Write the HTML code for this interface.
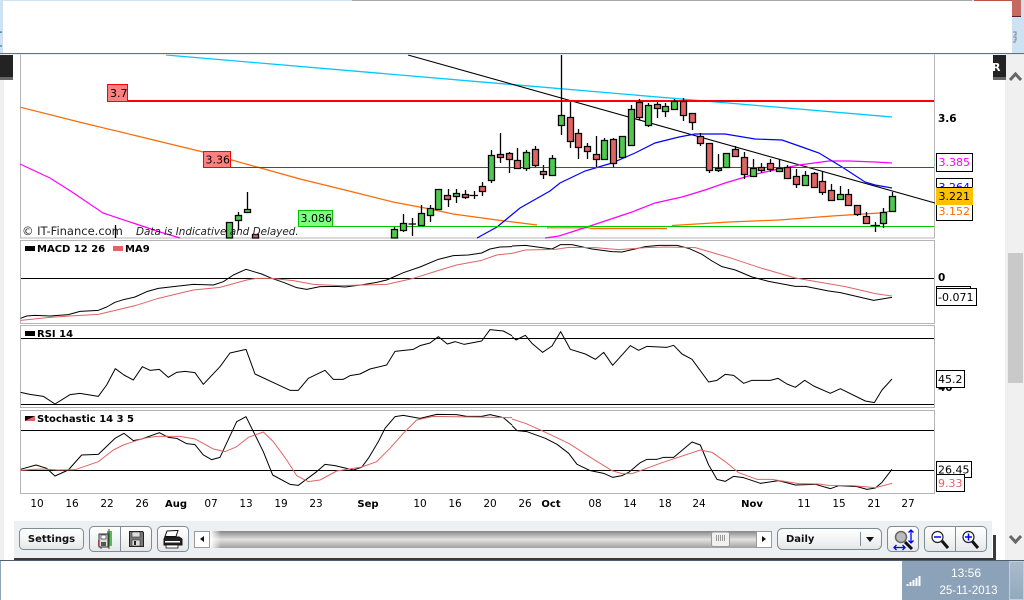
<!DOCTYPE html>
<html><head><meta charset="utf-8"><style>
html,body{margin:0;padding:0;width:1024px;height:600px;overflow:hidden;background:#fff}
svg{display:block}
text{font-family:"DejaVu Sans",sans-serif;font-size:11px}
.b{font-weight:bold;font-size:10px}
.a{font-size:10.5px}
.l{fill:none;stroke:#000;stroke-width:1.100}
.h{stroke-width:1;shape-rendering:crispEdges}
.z{fill:none;stroke-width:3;stroke-linejoin:round}
</style></head><body>
<svg width="1024" height="600" viewBox="0 0 1024 600" xmlns="http://www.w3.org/2000/svg">
<defs>
<linearGradient id="btn" x1="0" y1="0" x2="0" y2="1"><stop offset="0" stop-color="#fff"/><stop offset=".55" stop-color="#f2f3f4"/><stop offset="1" stop-color="#e3e6e8"/></linearGradient>
<linearGradient id="trk" x1="0" y1="0" x2="0" y2="1"><stop offset="0" stop-color="#868686"/><stop offset=".5" stop-color="#e2e2e2"/><stop offset="1" stop-color="#a0a0a0"/></linearGradient>
<linearGradient id="trkh" x1="0" y1="0" x2="1" y2="0"><stop offset="0" stop-color="#fff"/><stop offset=".02" stop-color="#fff" stop-opacity="0"/><stop offset="1" stop-color="#fff" stop-opacity="0"/></linearGradient>
<linearGradient id="sd" x1="0" y1="0" x2="0" y2="1"><stop offset="0" stop-color="#a9bccd"/><stop offset="1" stop-color="#93a9bd"/></linearGradient>
</defs>

<!-- page chrome -->
<rect width="1024" height="600" fill="#fff"/>
<rect x="0" y="0" width="4" height="560" fill="#f0f0f0"/>
<rect x="1005" y="54" width="19" height="507" fill="#f0f0f0"/>
<rect x="1008" y="253" width="15" height="130" fill="#c9c9c9"/>
<path d="M1010 80l5.500-6 5.500 6" fill="none" stroke="#666" stroke-width="3"/>
<path d="M1010 536l5.500 6 5.500-6" fill="none" stroke="#666" stroke-width="3"/>
<rect x="0" y="55" width="13" height="24" fill="#232323"/><rect x="0" y="77" width="13" height="3" fill="#666"/>
<rect x="993" y="55" width="13" height="24" fill="#232323"/><rect x="993" y="77" width="13" height="3" fill="#666"/>
<text x="992" y="71" fill="#fff" class="b" style="font-size:11px">R</text>

<!-- chart panels -->
<rect x="20.500" y="40.500" width="914" height="197.500" fill="#fff" stroke="#b5b5b5" class="h"/>
<rect x="20.500" y="240.500" width="914" height="83" fill="#fff" stroke="#b5b5b5" class="h"/>
<rect x="20.500" y="325.500" width="914" height="82" fill="#fff" stroke="#b5b5b5" class="h"/>
<rect x="20.500" y="410.500" width="914" height="83" fill="#fff" stroke="#b5b5b5" class="h"/>

<!-- main chart lines -->
<path d="M166 55L892 117" fill="none" stroke="#00c8ff" stroke-width="1.300"/>
<path d="M408 55L935 203" class="l"/>
<path d="M20.700 107.300L83 123 133 135 203 152 257 167 300 179 353 192 393 202 430 209 453 214 497 220 537 225M547 227.800H590M590 228.500H667M672 225.500L729 222 779 220 832 216 879 213 892 211" fill="none" stroke="#ff6a00" stroke-width="1.200"/>
<path d="M20 164L50 178 72 192 103 213 133 223 160 232 180 238" fill="none" stroke="#f0f" stroke-width="1.200"/>
<path d="M545 238L559 236 590 226 632 212 655 203 682 197 705 190 725 183 752 175 779 169 799 165 829 161 849 161 875 162 892 163" fill="none" stroke="#f0f" stroke-width="1.200"/>
<path d="M477 238L497 227 520 208 550 191 560 183 585 171 612 163 635 153 655 143 679 137 695 134 725 134 755 139 782 140 802 147 819 153 842 167 865 182 875 185 892 188" fill="none" stroke="#00f" stroke-width="1.200"/>
<rect x="127" y="100" width="807" height="2" fill="#f00"/>
<rect x="231" y="167" width="703" height="1" fill="#f00"/>
<rect x="333" y="226" width="601" height="1" fill="#00c800"/>
<rect x="107.500" y="84.500" width="20" height="17" fill="#ff8080" stroke="#f00"/>
<rect x="203.500" y="151.500" width="27" height="16" fill="#ff8080" stroke="#f00"/>
<rect x="298.500" y="210.500" width="34" height="16" fill="#80ff80" stroke="#00c000"/>
<text x="110" y="97">3.7</text>
<text x="205.500" y="163.500">3.36</text>
<text x="300.500" y="222">3.086</text>

<!-- candles -->
<path d="M115.500 225V238M238.500 212V230M247.500 192V209M421.500 205V213M394.500 227V238M403.500 214V232M412.500 218V236M408.500 224H416M430.500 205V222M448.500 189V207M456.500 189V203M465.500 190V199M474.500 191V199M469.500 195.500H478M482.500 182V196M491.500 150V183M500.500 133V163M509.500 152V173M517.500 148V169M526.500 150V171M535.500 146V167M543.500 165V179M552.500 155V175M561.500 55V135M570.500 102V148M578.500 129V159M587.500 143V159M596.500 136V167M604.500 138V160M613.500 138V167M622.500 136V158M631.500 105V145M639.500 99V120M648.500 103V127M657.500 102V118M665.500 103V117M674.500 99V109M683.500 98V121M692.500 113V130M700.500 133V146M709.500 143V173M718.500 154V172M726.500 153V168M735.500 146V157M744.500 152V179M753.500 159V177M761.500 163V173M770.500 159V172M779.500 159V172M787.500 165V178M796.500 169V188M805.500 171V185M814.500 172V187M822.500 171V195M831.500 184V201M840.500 186V199M848.500 189V205M857.500 205V216M866.500 212V223M875.500 222V232M870.500 225.500H880M883.500 208V228M892.500 192V211" fill="none" stroke="#000" stroke-width="1.300"/>
<path d="M226.500 222.500h6v15.500h-6zM235.500 215.500h6v5h-6zM244.500 209.500h6v3h-6zM391.500 229.500h6v8.500h-6zM400.500 223.500h6v7h-6zM418.500 213.500h6v12h-6zM427.500 208.500h6v7h-6zM435.500 189.500h6v20h-6zM453.500 193.500h6v3h-6zM488.500 155.500h6v25h-6zM523.500 152.500h6v16h-6zM549.500 158.500h6v17h-6zM558.500 115.500h6v10h-6zM601.500 140.500h6v19h-6zM619.500 136.500h6v21h-6zM628.500 109.500h6v36h-6zM645.500 105.500h6v20h-6zM662.500 106.500h6v5h-6zM671.500 101.500h6v8h-6zM715.500 168.500h6v2h-6zM723.500 153.500h6v14h-6zM750.500 168.500h6v8h-6zM776.500 168.500h6v3h-6zM802.500 175.500h6v10h-6zM837.500 194.500h6v5h-6zM880.500 212.500h6v11h-6zM889.500 196.500h6v15h-6z" fill="#4ec94e" stroke="#000" stroke-width="1.300"/>
<path d="M252.500 234.500h6v3.500h-6zM444.500 195.500h6v4h-6zM462.500 194.500h6v3h-6zM479.500 186.500h6v5h-6zM497.500 154.500h6v3h-6zM506.500 153.500h6v6h-6zM514.500 160.500h6v8h-6zM532.500 149.500h6v16h-6zM540.500 171.500h6v3h-6zM567.500 117.500h6v24h-6zM575.500 133.500h6v14h-6zM584.500 146.500h6v5h-6zM593.500 154.500h6v5h-6zM610.500 139.500h6v24h-6zM636.500 102.500h6v15h-6zM654.500 104.500h6v4h-6zM680.500 101.500h6v14h-6zM689.500 113.500h6v9h-6zM697.500 136.500h6v7h-6zM706.500 143.500h6v27h-6zM732.500 149.500h6v7h-6zM741.500 157.500h6v17h-6zM758.500 167.500h6v3h-6zM767.500 163.500h6v6h-6zM784.500 167.500h6v11h-6zM793.500 176.500h6v8h-6zM811.500 173.500h6v14h-6zM819.500 181.500h6v11h-6zM828.500 190.500h6v10h-6zM845.500 194.500h6v11h-6zM854.500 205.500h6v9h-6zM863.500 216.500h6v7h-6z" fill="#e06464" stroke="#000" stroke-width="1.300"/>

<!-- watermark -->
<text x="22" y="235" fill="#222" style="font-size:11.500px">© IT-Finance.com</text>
<text x="136" y="235" fill="#222" font-style="italic" style="font-size:10.400px">Data is Indicative and Delayed.</text>

<!-- panel labels -->
<rect x="25" y="246" width="10" height="5" fill="#000"/>
<text x="37" y="252" class="b">MACD 12 26</text>
<rect x="113" y="246" width="10" height="5" fill="#e06464"/>
<text x="125" y="252" class="b">MA9</text>
<rect x="25" y="331" width="10" height="5" fill="#000"/>
<text x="37" y="337" class="b">RSI 14</text>
<path d="M25 421L35 416V421Z" fill="#e06464"/><path d="M25 416H35L25 421Z" fill="#000"/>
<text x="37" y="422" class="b">Stochastic 14 3 5</text>

<!-- level lines -->
<path d="M21 278.500H934M21 338.500H934M21 404.500H934M21 430.500H934M21 470.500H934" stroke="#000" class="h" fill="none"/>

<!-- oscillators -->
<g transform="translate(0,235) scale(.33333)">
<polyline class="z" stroke="#000" points="62,250 80,243 105,241 150,243 205,239 240,229 295,226 320,216 345,202 370,194 405,186 440,170 475,160 520,155 580,148 640,150 670,140 700,120 738,103 785,117 815,130 850,142 890,158 920,163 960,155 1010,154 1035,156 1090,149 1130,142 1160,135 1210,113 1260,96 1315,73 1360,62 1405,60 1445,54 1470,42 1500,36 1536,35"/>
<polyline class="z" stroke="#e06464" points="62,256 150,247 210,243 295,238 405,212 475,190 580,165 660,157 740,135 770,130 815,130 880,137 940,148 1020,152 1160,148 1240,130 1320,105 1370,90 1445,76 1490,60 1536,55"/>
<polyline class="z" stroke="#000" points="62,472 90,478 130,484 165,507 210,479 240,475 295,484 320,450 346,401 372,420 400,435 427,395 450,406 478,403 505,427 530,412 555,409 585,413 610,448 660,395 690,354 738,343 765,417 870,466 895,466 925,430 975,406 1000,433 1030,433 1050,422 1080,417 1110,402 1160,390 1185,349 1240,343 1260,332 1290,324 1315,305 1342,327 1366,320 1392,328 1445,318 1470,284 1510,288 1536,302"/>
<polyline class="z" stroke="#000" points="62,703 108,690 140,700 165,723 205,705 245,660 295,658 345,610 372,595 400,617 425,612 478,593 505,607 530,610 560,626 585,629 610,660 635,674 660,667 710,560 738,545 790,650 818,720 870,748 895,751 950,710 975,688 1005,692 1060,705 1085,697 1105,670 1135,620 1155,580 1185,545 1210,541 1260,550 1310,538 1370,539 1400,544 1445,544 1470,539 1510,548 1536,570"/>
<polyline class="z" stroke="#e06464" points="62,706 100,703 130,702 175,705 225,704 295,680 340,645 370,630 430,610 470,604 540,604 585,612 640,642 675,650 710,635 745,607 790,591 820,620 860,675 890,722 925,740 960,735 1010,708 1085,696 1130,680 1170,640 1210,595 1250,555 1300,544 1536,548"/>
</g>
<g transform="translate(512,235) scale(.33333)">
<polyline class="z" stroke="#000" points="0,33 40,31 120,42 145,29 180,29 240,42 300,50 330,51 400,35 440,31 495,31 530,40 570,58 600,78 630,95 670,105 720,126 770,139 850,154 880,154 950,168 985,173 1085,196 1110,192 1140,187"/>
<polyline class="z" stroke="#e06464" points="0,55 40,45 130,43 170,37 250,38 320,44 400,38 460,36 550,38 650,67 740,97 850,129 1000,155 1090,176 1140,183"/>
<polyline class="z" stroke="#000" points="0,305 12,315 40,301 60,325 92,352 120,333 146,290 175,343 220,357 250,373 275,352 302,391 355,332 380,346 405,334 465,337 485,331 510,357 540,373 590,441 615,436 640,418 665,421 695,445 720,436 775,436 798,430 825,447 850,457 878,436 905,453 955,475 985,461 1060,498 1087,503 1110,465 1140,432"/>
<polyline class="z" stroke="#000" points="0,572 15,587 45,590 100,610 135,628 170,655 195,688 235,707 275,715 302,727 330,722 350,712 385,683 405,673 435,673 455,667 485,667 540,621 565,630 590,690 615,733 640,739 665,724 695,728 745,745 800,737 850,750 910,748 955,761 980,752 1035,755 1065,763 1090,759 1110,742 1140,703"/>
<polyline class="z" stroke="#e06464" points="0,552 40,565 90,587 170,625 240,670 300,707 330,716 360,716 450,683 565,645 600,652 640,680 680,713 735,733 780,733 860,746 920,747 950,751 1020,752 1090,758 1140,745"/>
</g>

<!-- axis values -->
<text x="938" y="122" class="b" style="font-size:10.500px">3.6</text>
<text x="938" y="281" class="b" style="font-size:10.500px">0</text>
<text x="938" y="391" class="b" style="font-size:10.500px">40</text>
<rect x="936.500" y="153.500" width="36" height="18" fill="#fff" stroke="#000" class="h"/>
<text x="938.500" y="166" fill="#f0f">3.385</text>
<rect x="936.500" y="178.500" width="36" height="42" fill="#fff" stroke="#000" class="h"/>
<text x="938.500" y="191" fill="#00f">3.264</text>
<rect x="936.500" y="187.500" width="36" height="17" fill="#ffc000" stroke="#ffc000" class="h"/>
<path d="M936.500 187.500H972.500" stroke="#000" class="h"/>
<text x="938.500" y="200" fill="#000">3.221</text>
<text x="938.500" y="215" fill="#ff6a00">3.152</text>
<rect x="936.500" y="286.500" width="34" height="10" fill="#fff" stroke="#000" class="h"/>
<rect x="936.500" y="288.500" width="40" height="17" fill="#fff" stroke="#000" class="h"/>
<text x="938" y="301">-0.071</text>
<rect x="936.500" y="370.500" width="28" height="17" fill="#fff" stroke="#000" class="h"/>
<text x="938" y="383">45.2</text>
<rect x="936.500" y="461.500" width="35" height="16" fill="#fff" stroke="#000" class="h"/>
<text x="938" y="473.500">26.45</text>
<rect x="936.500" y="474.500" width="28" height="17" fill="#fff" stroke="#000" class="h"/>
<text x="938" y="487" fill="#e06464">9.33</text>

<!-- date axis -->
<g text-anchor="middle">
<text x="37" y="507" class="a">10</text><text x="72" y="507" class="a">16</text><text x="107" y="507" class="a">22</text><text x="142" y="507" class="a">26</text>
<text x="176" y="507" class="b">Aug</text>
<text x="211" y="507" class="a">07</text><text x="246" y="507" class="a">13</text><text x="281" y="507" class="a">19</text><text x="316" y="507" class="a">23</text>
<text x="368" y="507" class="b">Sep</text>
<text x="420" y="507" class="a">10</text><text x="455" y="507" class="a">16</text><text x="490" y="507" class="a">20</text><text x="525" y="507" class="a">26</text>
<text x="551" y="507" class="b">Oct</text>
<text x="595" y="507" class="a">08</text><text x="630" y="507" class="a">14</text><text x="665" y="507" class="a">18</text><text x="699" y="507" class="a">24</text>
<text x="752" y="507" class="b">Nov</text>
<text x="804" y="507" class="a">11</text><text x="839" y="507" class="a">15</text><text x="874" y="507" class="a">21</text><text x="908" y="507" class="a">27</text>
</g>

<!-- toolbar -->
<rect x="993" y="535" width="3" height="26" fill="#3a3a3a"/>
<rect x="14" y="521" width="978" height="37" fill="#edf0f2"/>
<rect x="14" y="558" width="982" height="3" fill="#3a3a3a"/>

<rect x="19.500" y="528.500" width="64" height="21" rx="4" fill="url(#btn)" stroke="#7f8c94"/>
<text x="51.500" y="542" text-anchor="middle" class="b" fill="#111">Settings</text>

<rect x="89.500" y="526.500" width="62" height="25" rx="4" fill="url(#btn)" stroke="#7f8c94"/>
<path d="M120.500 527V551" stroke="#7f8c94" class="h"/>
<!-- candle save -->
<rect x="98" y="540" width="6" height="6" fill="#f06060"/><rect x="107" y="531" width="5" height="15" fill="#50c050"/>
<path d="M101 535V549M109 529V549" stroke="#444" fill="none"/>
<path d="M99 534h9v13h-9z" fill="#ddd" stroke="#333"/><rect x="101" y="535" width="5" height="4" fill="#fff" stroke="#333" stroke-width=".7"/><rect x="101" y="542" width="5" height="4" fill="#555"/>
<!-- floppy -->
<path d="M129.500 531.500h13l1 1v14h-14z" fill="#777" stroke="#222"/><rect x="132" y="532" width="8" height="5" fill="#ddd" stroke="#333" stroke-width=".6"/><rect x="132" y="540" width="8" height="6" fill="#ddd" stroke="#333" stroke-width=".6"/><rect x="134" y="541" width="2" height="4" fill="#222"/>

<rect x="157.500" y="526.500" width="31" height="25" rx="4" fill="url(#btn)" stroke="#7f8c94"/>
<!-- printer -->
<path d="M167 531l9-.500 2 0-2 6h-11z" fill="#fff" stroke="#111"/>
<path d="M165 537h14l3 2v6h-18v-6z" fill="#222" stroke="#111"/>
<rect x="165" y="541" width="15" height="1.500" fill="#fff"/><rect x="166" y="545" width="12" height="3" fill="#fff" stroke="#111" stroke-width=".8"/>

<!-- scrollbar -->
<rect x="194.500" y="531.500" width="15" height="16" fill="#fff" stroke="#9a9a9a"/>
<path d="M204 536v6l-4-3z" fill="#111"/>
<rect x="210" y="531" width="546" height="17" fill="url(#trk)"/>
<rect x="210" y="531" width="546" height="17" fill="url(#trkh)"/>
<rect x="711.500" y="532" width="18" height="14.500" rx="2" fill="#f0f0f0" stroke="#999"/>
<path d="M716.500 535v6M718.500 535v6M720.500 535v6M722.500 535v6M724.500 535v6" stroke="#999" class="h"/>
<rect x="756.500" y="531.500" width="15" height="16" fill="#fff" stroke="#9a9a9a"/>
<path d="M762 536v6l4-3z" fill="#111"/>

<!-- select -->
<rect x="777.500" y="528.500" width="104" height="21" rx="5" fill="url(#btn)" stroke="#7f8c94"/>
<path d="M860.500 532V546" stroke="#7f8c94" class="h"/>
<text x="786" y="542" class="b" fill="#111">Daily</text>
<path d="M866 537h8l-4 5z" fill="#111"/>

<!-- zoom fit -->
<rect x="887.500" y="526.500" width="31" height="25" rx="4" fill="url(#btn)" stroke="#7f8c94"/>
<path d="M905 542l7 7" stroke="#111" stroke-width="3" fill="none"/>
<circle cx="901" cy="537" r="5.500" fill="#bbb" stroke="#666" stroke-width="1.500"/>
<path d="M911 530v13M908.500 532.500L911 530l2.500 2.500M908.500 540.500L911 543l2.500-2.500M894 547.500h11M896.500 545l-2.500 2.500 2.500 2.500M902.500 545l2.500 2.500-2.500 2.500" fill="none" stroke="#00f" stroke-width="1.300"/>

<!-- zoom in/out -->
<rect x="924.500" y="526.500" width="62" height="25" rx="4" fill="url(#btn)" stroke="#7f8c94"/>
<path d="M955.500 527V551" stroke="#7f8c94" class="h"/>
<path d="M942 541l6 7M972 541l6 7" stroke="#111" stroke-width="3" fill="none"/>
<circle cx="937.500" cy="537" r="5.500" fill="#fff" stroke="#222" stroke-width="1.200"/>
<circle cx="968.500" cy="537" r="5.500" fill="#fff" stroke="#222" stroke-width="1.200"/>
<path d="M934 537h7M965 537h7M968.500 533.500v7" stroke="#00f" stroke-width="1.500" fill="none"/>

<!-- top band -->
<rect x="0" y="0" width="1024" height="53" fill="#cfe2f3"/>
<rect x="352" y="0" width="620" height="1" fill="#a8a8a8"/>
<rect x="974" y="0" width="47" height="17" fill="#c0504a"/>
<rect x="1012" y="0" width="9" height="17" fill="#c46a60"/><rect x="1012" y="16" width="9" height="1" fill="#5a2020"/>
<path d="M1013 32h3v3h-2M1013 37h3v3h-2M1013 42h3" fill="none" stroke="#7a8a96"/>
<rect x="3" y="1" width="1009" height="52" fill="#fff"/>
<path d="M2 32a6 6 0 0 0 0 14" fill="none" stroke="#4a8ab0" stroke-width="1.500"/>
<rect x="0" y="53" width="1024" height="1" fill="#5f7285"/>
<rect x="0" y="54" width="1024" height="1" fill="#d5dde3" opacity=".5"/>

<!-- bottom band -->
<rect x="0" y="560" width="1024" height="1" fill="#4e5f70"/>
<rect x="0" y="561" width="1" height="39" fill="#8fa5bb"/>
<rect x="902" y="561" width="122" height="39" fill="#8ba2b8"/>
<rect x="1009.500" y="561.500" width="14" height="38" fill="url(#sd)" stroke="#c0cfdc"/>
<path d="M907.500 586v-2M910.500 586v-4M913.500 586v-6M916.500 586v-8M919.500 586v-10" stroke="#fff" stroke-width="2" fill="none"/>
<text x="966" y="577" text-anchor="middle" fill="#fff" style="font-family:'Liberation Sans',sans-serif;font-size:12px">13:56</text>
<text x="968.500" y="594" text-anchor="middle" fill="#fff" style="font-family:'Liberation Sans',sans-serif;font-size:11.500px">25-11-2013</text>
</svg>
</body></html>
